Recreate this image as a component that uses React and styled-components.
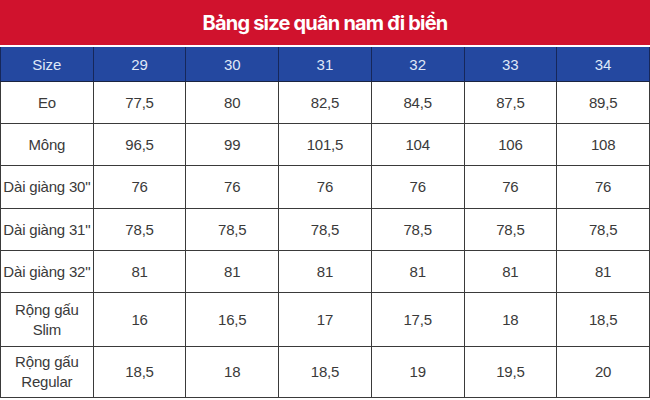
import React from 'react';
import styled, { createGlobalStyle } from 'styled-components';

const GlobalStyle = createGlobalStyle`
  html, body {
    margin: 0;
    padding: 0;
    background: #ffffff;
  }
  body {
    font-family: "Liberation Sans", Arial, sans-serif;
  }
`;

const Page = styled.div`
  width: 650px;
  height: 400px;
  overflow: hidden;
  background: #ffffff;
`;

const Banner = styled.div`
  height: 45px;
  background: #d0122d;
  color: #ffffff;
  display: flex;
  align-items: center;
  justify-content: center;
  font-family: Inter, "Liberation Sans", sans-serif;
  font-size: 20px;
  font-weight: 700;
  letter-spacing: -0.8px;
  margin-bottom: 2px;
`;

const Table = styled.table`
  width: 650px;
  border-collapse: collapse;
  table-layout: fixed;
`;

const HeadCell = styled.th`
  height: 34px;
  padding: 0;
  background: #2448a0;
  color: #dfe7f7;
  font-size: 15px;
  font-weight: 400;
  text-align: center;
  border-left: 1px solid #16275a;
  border-bottom: 1px solid #1b2440;
  &:last-child {
    border-right: 1px solid #16275a;
  }
`;

const Cell = styled.td`
  height: ${(p) => p.$h}px;
  padding: 0;
  color: #3a3a3a;
  font-size: 15px;
  font-weight: 400;
  line-height: 20px;
  letter-spacing: -0.2px;
  text-align: center;
  border: 1px solid #3a3a3a;
  border-top: none;
  white-space: pre;
`;

const sizes = ['29', '30', '31', '32', '33', '34'];

const rows = [
  { label: 'Eo', h: 41, vals: ['77,5', '80', '82,5', '84,5', '87,5', '89,5'] },
  { label: 'Mông', h: 41, vals: ['96,5', '99', '101,5', '104', '106', '108'] },
  { label: 'Dài giàng 30"', h: 42, vals: ['76', '76', '76', '76', '76', '76'] },
  { label: 'Dài giàng 31"', h: 41, vals: ['78,5', '78,5', '78,5', '78,5', '78,5', '78,5'] },
  { label: 'Dài giàng 32"', h: 41, vals: ['81', '81', '81', '81', '81', '81'] },
  { label: 'Rộng gấu\nSlim', h: 53, vals: ['16', '16,5', '17', '17,5', '18', '18,5'] },
  { label: 'Rộng gấu\nRegular', h: 50, vals: ['18,5', '18', '18,5', '19', '19,5', '20'] },
];

export default function App() {
  return (
    <Page>
      <GlobalStyle />
      <Banner>Bảng size quân nam đi biển</Banner>
      <Table>
        <thead>
          <tr>
            <HeadCell>Size</HeadCell>
            {sizes.map((s) => (
              <HeadCell key={s}>{s}</HeadCell>
            ))}
          </tr>
        </thead>
        <tbody>
          {rows.map((r) => (
            <tr key={r.label}>
              <Cell $h={r.h}>{r.label}</Cell>
              {r.vals.map((v, i) => (
                <Cell $h={r.h} key={i}>
                  {v}
                </Cell>
              ))}
            </tr>
          ))}
        </tbody>
      </Table>
    </Page>
  );
}
